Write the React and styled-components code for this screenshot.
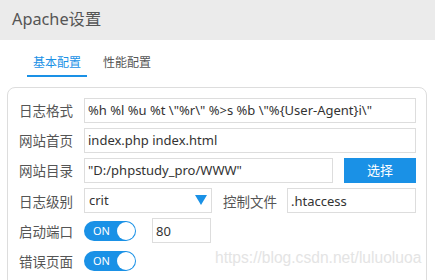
import React from 'react'
import styled, { createGlobalStyle } from 'styled-components'

const GlobalStyle = createGlobalStyle`
  body{
    margin:0;
    background:#fff;
    font-family:"Noto Sans","Noto Sans CJK SC",sans-serif;
    overflow:hidden;
  }
`

const BLUE = '#1a91e6'

function App() {
  return (
    <Page>
      <GlobalStyle />
      <Header>Apache设置</Header>
      <Tabs>
        <Tab active>基本配置</Tab>
        <Tab>性能配置</Tab>
      </Tabs>
      <Card>
        <Row>
          <Label>日志格式</Label>
          <Field value={'%h %l %u %t \\"%r\\" %>s %b \\"%{User-Agent}i\\"'} readOnly />
        </Row>
        <Row>
          <Label>网站首页</Label>
          <Field value="index.php index.html" readOnly />
        </Row>
        <Row>
          <Label>网站目录</Label>
          <Field value={'"D:/phpstudy_pro/WWW"'} readOnly />
          <Button>选择</Button>
        </Row>
        <Row>
          <Label>日志级别</Label>
          <Select>
            crit
            <Arrow />
          </Select>
          <Label side>控制文件</Label>
          <Field value=".htaccess" readOnly />
        </Row>
        <Row>
          <Label>启动端口</Label>
          <Toggle>
            ON
            <Knob />
          </Toggle>
          <Field value="80" readOnly width="59px" />
        </Row>
        <Row>
          <Label>错误页面</Label>
          <Toggle>
            ON
            <Knob />
          </Toggle>
        </Row>
      </Card>
      <Watermark>https://blog.csdn.net/luluoluoa</Watermark>
    </Page>
  )
}

const Page = styled.div`
  position:relative;
  width:435px;
  height:280px;
  overflow:hidden;
`

const Header = styled.div`
  height:40px;
  background:#ebebeb;
  padding-left:12px;
  line-height:38px;
  font-size:16.3px;
  color:#555;
`

const Tabs = styled.div`
  display:flex;
  gap:10px;
  margin-top:10px;
  padding-left:27px;
`

const Tab = styled.div`
  padding:0 6px;
  height:25px;
  line-height:25px;
  font-size:12px;
  color:${p => p.active ? BLUE : '#555'};
  border-bottom:2px solid ${p => p.active ? BLUE : 'transparent'};
`

const Card = styled.div`
  margin:10px 0 0 7px;
  width:420px;
  height:220px;
  box-sizing:border-box;
  border:1px solid #ddd;
  border-radius:8px;
  padding:10px 10px 0 11px;
  display:flex;
  flex-direction:column;
  gap:6.2px;
`

const Row = styled.div`
  display:flex;
  align-items:center;
  height:24px;
`

const Label = styled.div`
  width:${p => p.side ? 'auto' : '65px'};
  margin:${p => p.side ? '0 10px 0 11px' : '0'};
  flex-shrink:0;
  font-size:13.5px;
  color:#555;
  white-space:nowrap;
`

const Field = styled.input`
  flex:${p => p.width ? 'none' : '1'};
  width:${p => p.width || 'auto'};
  min-width:0;
  height:25px;
  box-sizing:border-box;
  border:1px solid #ddd;
  padding:0 3px;
  font-family:"Noto Sans","Noto Sans CJK SC",sans-serif;
  font-size:13px;
  color:#333;
  outline:none;
`

const Button = styled.div`
  width:72px;
  height:25px;
  margin-left:11px;
  background:${BLUE};
  color:#fff;
  font-size:13px;
  line-height:25px;
  text-align:center;
`

const Select = styled.div`
  position:relative;
  width:128px;
  height:25px;
  box-sizing:border-box;
  border:1px solid #ddd;
  padding-left:4px;
  font-size:13px;
  line-height:23px;
  color:#333;
`

const Arrow = styled.span`
  position:absolute;
  right:4px;
  top:6px;
  border-left:6px solid transparent;
  border-right:6px solid transparent;
  border-top:10px solid ${BLUE};
`

const Toggle = styled.div`
  position:relative;
  width:52px;
  height:20px;
  margin-right:16px;
  border-radius:10px;
  background:${BLUE};
  color:#fff;
  font-size:11px;
  line-height:20px;
  padding-left:9px;
  box-sizing:border-box;
`

const Knob = styled.span`
  position:absolute;
  right:1px;
  top:1px;
  width:18px;
  height:18px;
  border-radius:50%;
  background:#fff;
`

const Watermark = styled.div`
  position:absolute;
  left:215px;
  top:249px;
  font-family:"Liberation Sans",sans-serif;
  font-size:15.6px;
  color:#e4e4e4;
  pointer-events:none;
`

export default App
